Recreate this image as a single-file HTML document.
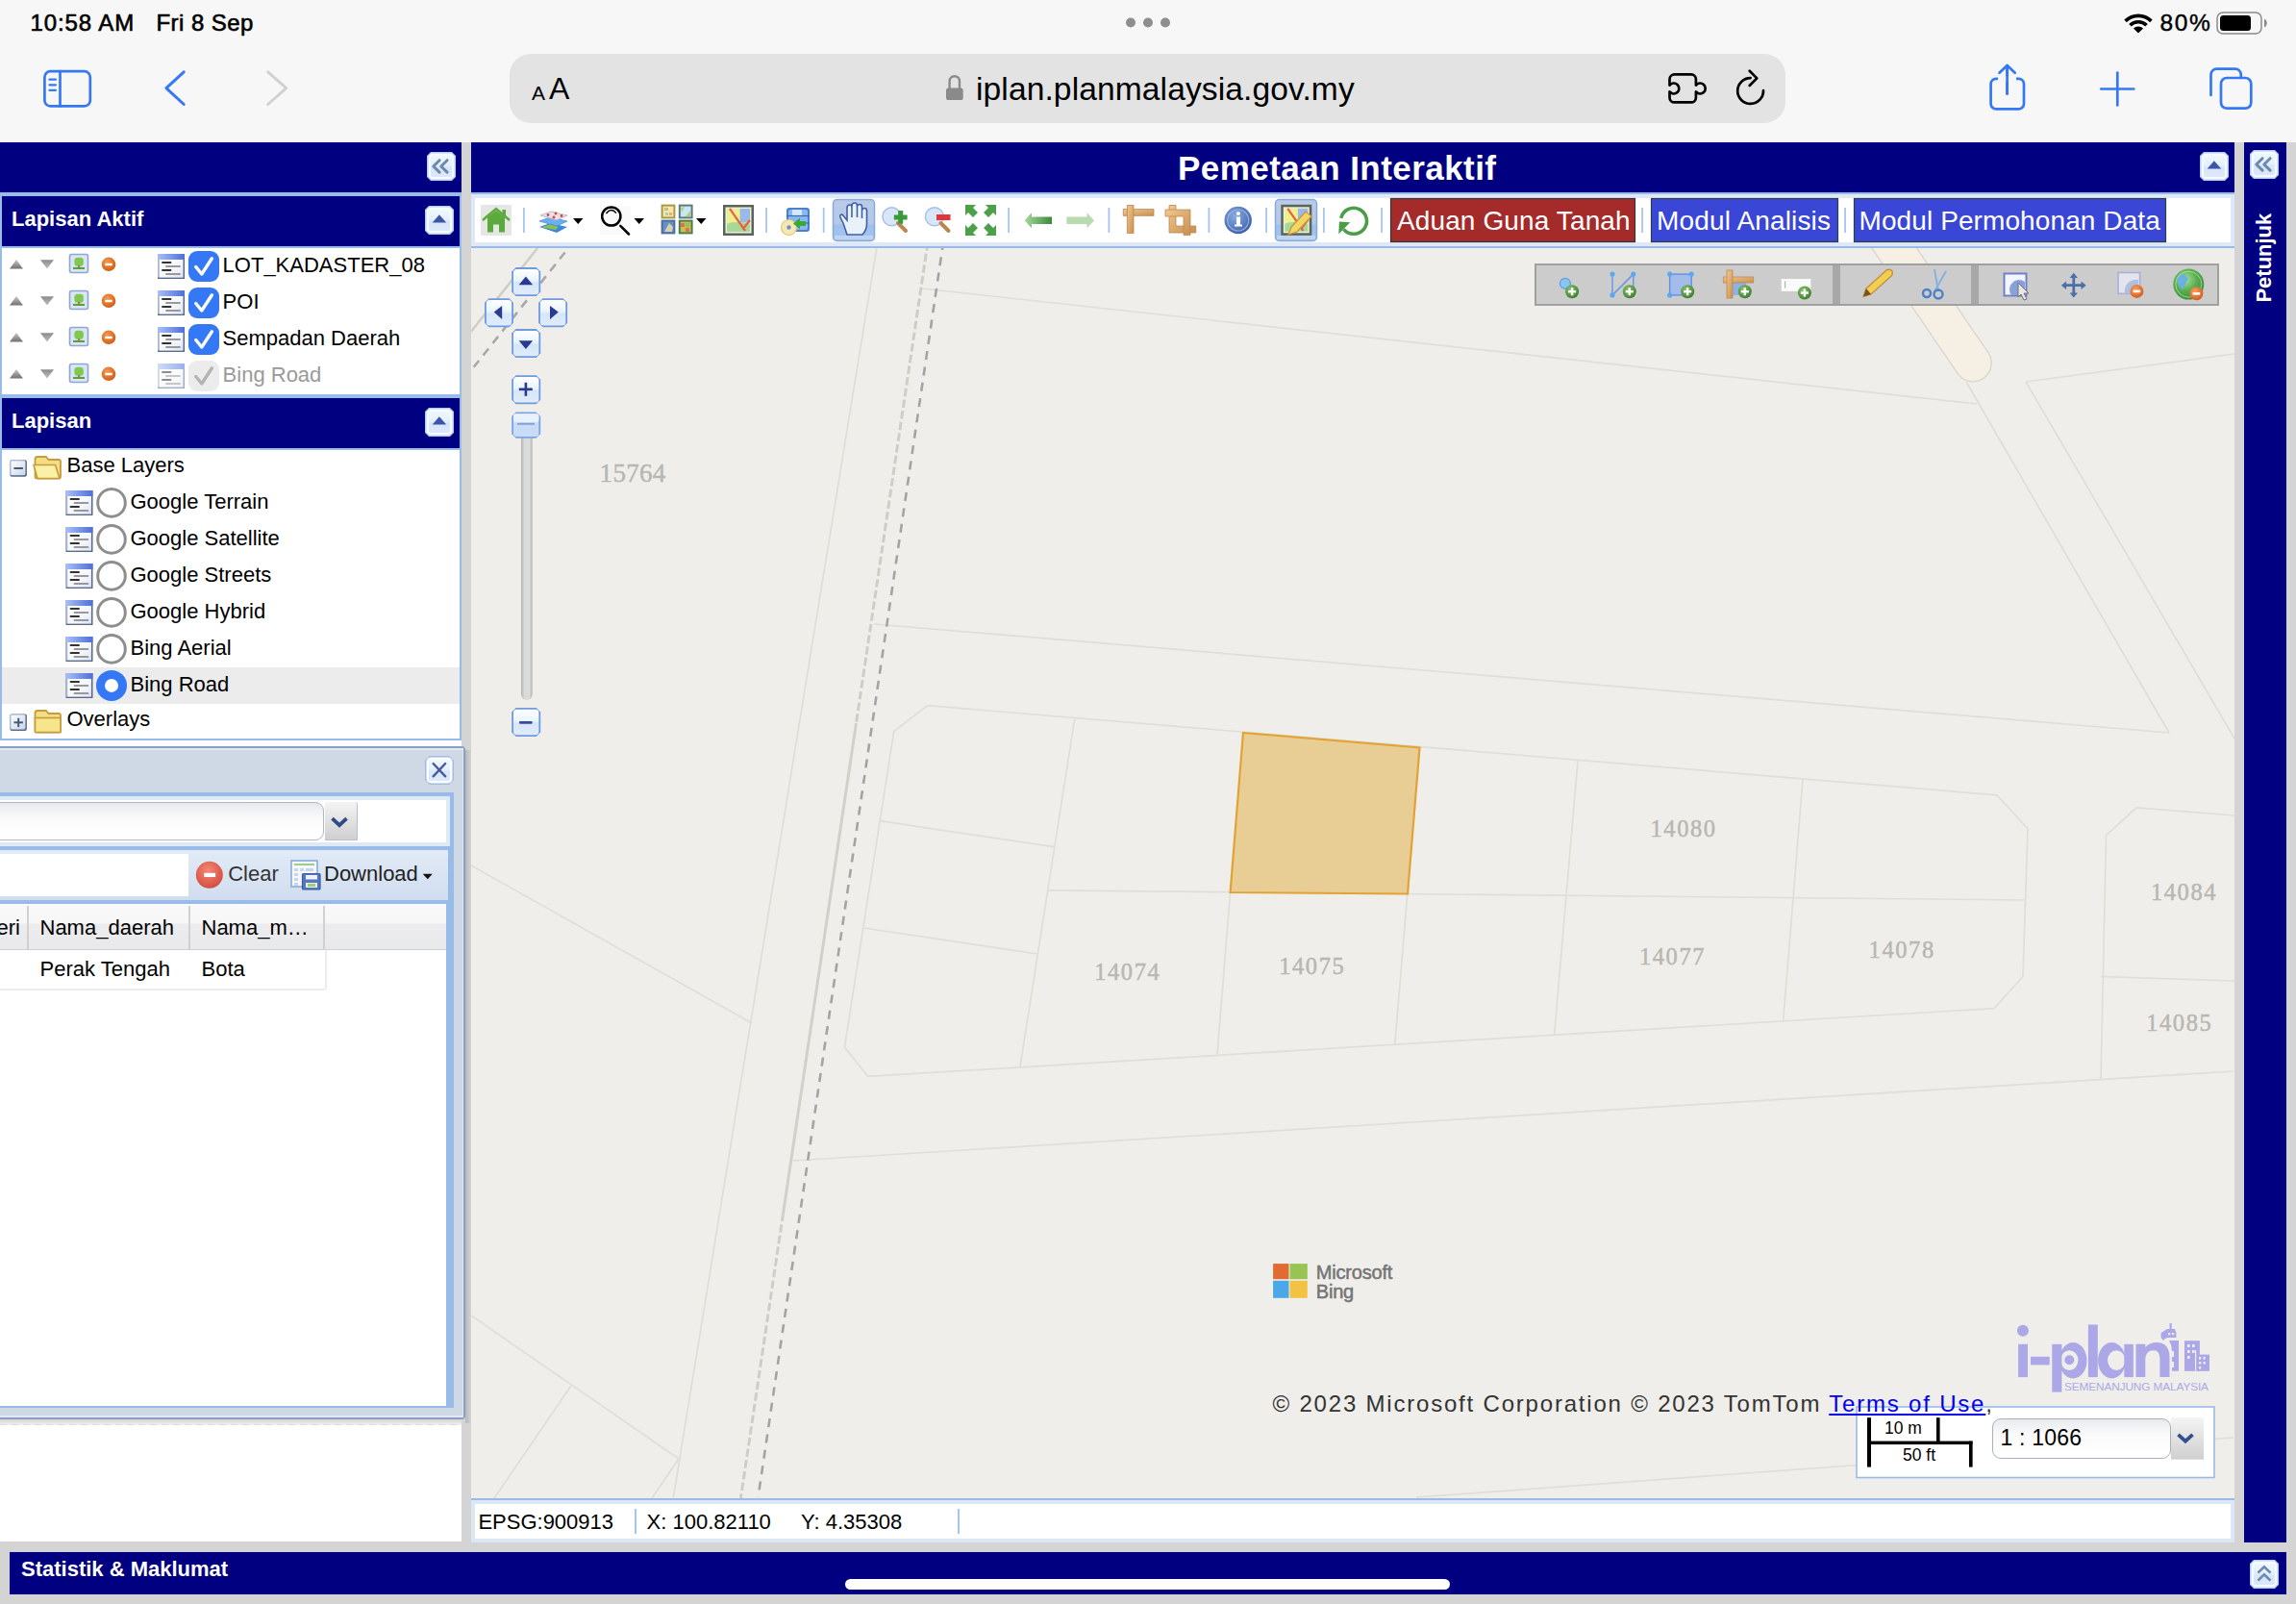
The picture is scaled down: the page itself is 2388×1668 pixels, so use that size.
<!DOCTYPE html>
<html><head><meta charset="utf-8">
<style>
*{margin:0;padding:0;box-sizing:border-box}
html,body{width:2388px;height:1668px;overflow:hidden;background:#d4d4d4;font-family:"Liberation Sans",sans-serif;position:relative}
.a{position:absolute}
.navy{background:#000080}
.t{position:absolute;white-space:nowrap;line-height:1;-webkit-font-smoothing:antialiased}
body{-webkit-font-smoothing:antialiased}
svg{position:absolute;overflow:visible}
</style></head><body>

<!-- safari chrome -->
<div class="a" style="left:0;top:0;width:2388px;height:148px;background:#f7f7f7"></div>
<div class="a" style="left:530px;top:56px;width:1327px;height:72px;border-radius:22px;background:#e3e3e3"></div>
<div class="t" style="left:31.5px;top:12px;font-size:24px;font-weight:400;color:#000;letter-spacing:0.9px;-webkit-text-stroke:0.6px #000">10:58 AM</div>
<div class="t" style="left:162.5px;top:12px;font-size:24px;font-weight:400;color:#000;letter-spacing:0.45px;-webkit-text-stroke:0.6px #000">Fri 8 Sep</div>
<svg class="a" style="left:0;top:0" width="2388" height="148">
 <g fill="#8e8e8e"><circle cx="1176" cy="23.5" r="5"/><circle cx="1194" cy="23.5" r="5"/><circle cx="1212" cy="23.5" r="5"/></g>
 <g fill="none" stroke="#3478f6" stroke-width="2.7" stroke-linecap="round" stroke-linejoin="round">
  <rect x="46.4" y="74.2" width="47.4" height="36.2" rx="6"/>
  <line x1="62.5" y1="74.2" x2="62.5" y2="110.4"/>
  <line x1="51.4" y1="82.7" x2="57.9" y2="82.7" stroke-width="2.2"/>
  <line x1="51.4" y1="88.3" x2="57.9" y2="88.3" stroke-width="2.2"/>
  <line x1="51.4" y1="93.8" x2="57.9" y2="93.8" stroke-width="2.2"/>
  <polyline points="191.2,74.8 172.9,91.6 191.2,108.5" stroke-width="3"/>
  <rect x="2070.6" y="81.8" width="34.4" height="31.6" rx="5.5" />
  <line x1="2087.6" y1="68.5" x2="2087.6" y2="97.4"/>
  <polyline points="2079.5,75.8 2087.6,68 2095.7,75.8"/>
  <line x1="2185.3" y1="92.5" x2="2219.3" y2="92.5"/>
  <line x1="2202.3" y1="75.5" x2="2202.3" y2="109.5"/>
  <path d="M2299.5 99 V77.6 a6 6 0 0 1 6 -6 H2324.8 a6 6 0 0 1 6 6 V81"/>
  <rect x="2310" y="81" width="31.3" height="31.7" rx="6"/>
 </g>
 <rect x="2078" y="79" width="19" height="6" fill="#f6f6f6"/>
 <line x1="2087.6" y1="68.5" x2="2087.6" y2="97.4" stroke="#3478f6" stroke-width="2.7" stroke-linecap="round"/>
 <polyline points="278.7,74.8 297.7,91.6 278.7,108.5" fill="none" stroke="#d1d1d1" stroke-width="3" stroke-linecap="round" stroke-linejoin="round"/>
 <!-- lock -->
 <path d="M987.6 92 v-7.6 a5.2 5.2 0 0 1 10.4 0 v7.6" fill="none" stroke="#8a8a8a" stroke-width="2.4"/>
 <rect x="984" y="91.4" width="17.7" height="12.6" rx="2.6" fill="#8a8a8a"/>
 <!-- extension -->
 <path d="M1741.5 77.4 H1758.9 a5 5 0 0 1 5 5 V88.6 A5.5 5.5 0 1 1 1763.9 95.4 V101.4 a5 5 0 0 1 -5 5 H1741.5 a5 5 0 0 1 -5 -5 V95.4 A5.5 5.5 0 1 0 1736.5 88.6 V82.4 a5 5 0 0 1 5 -5 Z" fill="none" stroke="#000" stroke-width="2.7" stroke-linejoin="round"/>
 <!-- reload -->
 <path d="M1834 94 A13.4 13.4 0 1 1 1820.6 81.1" fill="none" stroke="#000" stroke-width="2.7" stroke-linecap="round"/>
 <polyline points="1819.7,73.8 1827.3,81.4 1819.7,89" fill="none" stroke="#000" stroke-width="2.7" stroke-linecap="round" stroke-linejoin="round"/>
 <!-- wifi -->
 <g fill="none" stroke="#000" stroke-width="3.7">
  <path d="M2210.6 21.9 A19 19 0 0 1 2237.4 21.9"/>
  <path d="M2215.5 26.3 A12 12 0 0 1 2232.5 26.3"/>
 </g>
 <path d="M2224 34.6 L2218.9 29.5 A7.2 7.2 0 0 1 2229.1 29.5 Z" fill="#000"/>
 <rect x="2306" y="13" width="46" height="22" rx="6" fill="none" stroke="#8a8a8a" stroke-width="1.5"/>
 <rect x="2309" y="16" width="32" height="16" rx="3.5" fill="#000"/>
 <path d="M2355 19.5 a5 5 0 0 1 0 9 z" fill="#8a8a8a"/>
</svg>
<div class="t" style="left:2246.5px;top:11.6px;font-size:24.5px;color:#000;letter-spacing:1.6px;-webkit-text-stroke:0.4px #000">80%</div>
<div class="t" style="left:553px;top:86.2px;font-size:21px;color:#000">A</div>
<div class="t" style="left:571px;top:76px;font-size:32px;color:#000">A</div>
<div class="t" style="left:1015px;top:75.6px;font-size:33.6px;color:#000;letter-spacing:0.1px">iplan.planmalaysia.gov.my</div>


<div class="a" style="left:0px;top:148px;width:480px;height:52px;background:#000080"></div>
<div class="a" style="left:0px;top:200px;width:480px;height:4px;background:#99bbe8"></div>
<div class="a" style="left:0px;top:204px;width:480px;height:566px;background:#99bbe8"></div>
<div class="a" style="left:2px;top:204px;width:476px;height:52px;background:#000080"></div>
<div class="a" style="left:2px;top:258px;width:476px;height:152px;background:#fff"></div>
<div class="a" style="left:2px;top:414px;width:476px;height:52px;background:#000080"></div>
<div class="a" style="left:2px;top:468px;width:476px;height:300px;background:#fff"></div>
<div class="a" style="left:2px;top:694px;width:476px;height:38px;background:#ececec"></div>
<div class="a" style="left:0px;top:770px;width:480px;height:833px;background:#fff"></div>
<svg style="left:0;top:0" width="490" height="1668">
<defs>
<linearGradient id="gbtn" x1="0" y1="0" x2="0" y2="1"><stop offset="0" stop-color="#eef8fd"/><stop offset="0.45" stop-color="#e4f0fb"/><stop offset="0.55" stop-color="#d8e6f9"/><stop offset="1" stop-color="#dce8fa"/></linearGradient>
<linearGradient id="glt" x1="0" y1="0" x2="1" y2="0"><stop offset="0" stop-color="#a8c0f4"/><stop offset="1" stop-color="#4e6fd8"/></linearGradient>
<linearGradient id="glg" x1="0" y1="0" x2="1" y2="1"><stop offset="0" stop-color="#ffffff"/><stop offset="0.6" stop-color="#f4f6fc"/><stop offset="1" stop-color="#dfe4f4"/></linearGradient>
<linearGradient id="gpm" x1="0" y1="0" x2="1" y2="1"><stop offset="0" stop-color="#fdfeff"/><stop offset="1" stop-color="#c9d6ea"/></linearGradient>
<linearGradient id="gtri" x1="0" y1="0" x2="0" y2="1"><stop offset="0" stop-color="#c8c8c8"/><stop offset="1" stop-color="#707070"/></linearGradient>
<linearGradient id="gtri2" x1="0" y1="0" x2="0" y2="1"><stop offset="0" stop-color="#8a8a8a"/><stop offset="1" stop-color="#c0c0c0"/></linearGradient>
<radialGradient id="gor" cx="0.4" cy="0.35" r="0.7"><stop offset="0" stop-color="#f59a52"/><stop offset="1" stop-color="#cf5a12"/></radialGradient>
<radialGradient id="gred" cx="0.45" cy="0.35" r="0.7"><stop offset="0" stop-color="#f48878"/><stop offset="1" stop-color="#d2483a"/></radialGradient>
</defs>
<polygon points="448,158 470,158 474,162 474,184 470,188 448,188 444,184 444,162" fill="#b4cdee"/><polygon points="448.5,159.5 469.5,159.5 472.5,162.5 472.5,183.5 469.5,186.5 448.5,186.5 445.5,183.5 445.5,162.5" fill="#f6f9fd"/><rect x="448" y="162" width="22" height="22" rx="2" fill="url(#gbtn)"/><polyline points="457.1,166.7 450.8,173 457.1,179.1" fill="none" stroke="#6a8ab0" stroke-width="3" stroke-linecap="round" stroke-linejoin="round"/><polyline points="465.1,166.7 458.8,173 465.1,179.1" fill="none" stroke="#6a8ab0" stroke-width="3" stroke-linecap="round" stroke-linejoin="round"/>
<polygon points="446,214 468,214 472,218 472,240 468,244 446,244 442,240 442,218" fill="#b4cdee"/><polygon points="446.5,215.5 467.5,215.5 470.5,218.5 470.5,239.5 467.5,242.5 446.5,242.5 443.5,239.5 443.5,218.5" fill="#f6f9fd"/><rect x="446" y="218" width="22" height="22" rx="2" fill="url(#gbtn)"/><polygon points="456.9,223.3 449.7,231.5 464.2,231.5" fill="#3d55a8"/>
<polygon points="446,424 468,424 472,428 472,450 468,454 446,454 442,450 442,428" fill="#b4cdee"/><polygon points="446.5,425.5 467.5,425.5 470.5,428.5 470.5,449.5 467.5,452.5 446.5,452.5 443.5,449.5 443.5,428.5" fill="#f6f9fd"/><rect x="446" y="428" width="22" height="22" rx="2" fill="url(#gbtn)"/><polygon points="456.9,433.3 449.7,441.5 464.2,441.5" fill="#3d55a8"/>
<polygon points="17,270 10,279.5 24,279.5" fill="url(#gtri)"/>
<polygon points="42,270.2 56,270.2 49,279.5" fill="url(#gtri2)"/>
<rect x="72.5" y="264.5" width="19" height="19" rx="2" fill="#dce6f2" stroke="#8ea6d2" stroke-width="1.6"/>
<rect x="76.5" y="268" width="11" height="11" fill="#cfe0f0"/>
<rect x="77.4" y="267.8" width="9.4" height="9" rx="3.6" fill="#80c850"/>
<rect x="81" y="276" width="2.2" height="2.5" fill="#b07a40"/>
<rect x="76" y="278" width="12" height="2" fill="#5aa040"/>
<circle cx="113" cy="274.8" r="7.3" fill="url(#gor)"/>
<rect x="109.2" y="273.8" width="7.6" height="2.4" fill="#fff"/>
<g transform="translate(164,264)"><rect x="0" y="0" width="28" height="26" fill="#5a6a88"/><rect x="0" y="0" width="26.5" height="24.5" fill="#a9b8d0"/><rect x="1.8" y="6" width="24.5" height="18.5" fill="url(#glg)"/><rect x="0" y="0" width="28" height="6" fill="url(#glt)"/><g stroke-linecap="round" stroke-width="1.9"><line x1="5" y1="9" x2="13.5" y2="9" stroke="#333"/><line x1="9" y1="13" x2="23" y2="13" stroke="#999"/><line x1="5" y1="17" x2="13.5" y2="17" stroke="#333"/><line x1="9" y1="21" x2="23" y2="21" stroke="#999"/></g></g>
<rect x="196" y="261" width="32" height="32" rx="9" fill="#3478f6"/><polyline points="203.7,277.5 209.8,285 220.4,268.8" fill="none" stroke="#fff" stroke-width="3.4" stroke-linecap="round" stroke-linejoin="round"/>
<polygon points="17,308 10,317.5 24,317.5" fill="url(#gtri)"/>
<polygon points="42,308.2 56,308.2 49,317.5" fill="url(#gtri2)"/>
<rect x="72.5" y="302.5" width="19" height="19" rx="2" fill="#dce6f2" stroke="#8ea6d2" stroke-width="1.6"/>
<rect x="76.5" y="306" width="11" height="11" fill="#cfe0f0"/>
<rect x="77.4" y="305.8" width="9.4" height="9" rx="3.6" fill="#80c850"/>
<rect x="81" y="314" width="2.2" height="2.5" fill="#b07a40"/>
<rect x="76" y="316" width="12" height="2" fill="#5aa040"/>
<circle cx="113" cy="312.8" r="7.3" fill="url(#gor)"/>
<rect x="109.2" y="311.8" width="7.6" height="2.4" fill="#fff"/>
<g transform="translate(164,302)"><rect x="0" y="0" width="28" height="26" fill="#5a6a88"/><rect x="0" y="0" width="26.5" height="24.5" fill="#a9b8d0"/><rect x="1.8" y="6" width="24.5" height="18.5" fill="url(#glg)"/><rect x="0" y="0" width="28" height="6" fill="url(#glt)"/><g stroke-linecap="round" stroke-width="1.9"><line x1="5" y1="9" x2="13.5" y2="9" stroke="#333"/><line x1="9" y1="13" x2="23" y2="13" stroke="#999"/><line x1="5" y1="17" x2="13.5" y2="17" stroke="#333"/><line x1="9" y1="21" x2="23" y2="21" stroke="#999"/></g></g>
<rect x="196" y="299" width="32" height="32" rx="9" fill="#3478f6"/><polyline points="203.7,315.5 209.8,323 220.4,306.8" fill="none" stroke="#fff" stroke-width="3.4" stroke-linecap="round" stroke-linejoin="round"/>
<polygon points="17,346 10,355.5 24,355.5" fill="url(#gtri)"/>
<polygon points="42,346.2 56,346.2 49,355.5" fill="url(#gtri2)"/>
<rect x="72.5" y="340.5" width="19" height="19" rx="2" fill="#dce6f2" stroke="#8ea6d2" stroke-width="1.6"/>
<rect x="76.5" y="344" width="11" height="11" fill="#cfe0f0"/>
<rect x="77.4" y="343.8" width="9.4" height="9" rx="3.6" fill="#80c850"/>
<rect x="81" y="352" width="2.2" height="2.5" fill="#b07a40"/>
<rect x="76" y="354" width="12" height="2" fill="#5aa040"/>
<circle cx="113" cy="350.8" r="7.3" fill="url(#gor)"/>
<rect x="109.2" y="349.8" width="7.6" height="2.4" fill="#fff"/>
<g transform="translate(164,340)"><rect x="0" y="0" width="28" height="26" fill="#5a6a88"/><rect x="0" y="0" width="26.5" height="24.5" fill="#a9b8d0"/><rect x="1.8" y="6" width="24.5" height="18.5" fill="url(#glg)"/><rect x="0" y="0" width="28" height="6" fill="url(#glt)"/><g stroke-linecap="round" stroke-width="1.9"><line x1="5" y1="9" x2="13.5" y2="9" stroke="#333"/><line x1="9" y1="13" x2="23" y2="13" stroke="#999"/><line x1="5" y1="17" x2="13.5" y2="17" stroke="#333"/><line x1="9" y1="21" x2="23" y2="21" stroke="#999"/></g></g>
<rect x="196" y="337" width="32" height="32" rx="9" fill="#3478f6"/><polyline points="203.7,353.5 209.8,361 220.4,344.8" fill="none" stroke="#fff" stroke-width="3.4" stroke-linecap="round" stroke-linejoin="round"/>
<polygon points="17,384 10,393.5 24,393.5" fill="url(#gtri)"/>
<polygon points="42,384.2 56,384.2 49,393.5" fill="url(#gtri2)"/>
<rect x="72.5" y="378.5" width="19" height="19" rx="2" fill="#dce6f2" stroke="#8ea6d2" stroke-width="1.6"/>
<rect x="76.5" y="382" width="11" height="11" fill="#cfe0f0"/>
<rect x="77.4" y="381.8" width="9.4" height="9" rx="3.6" fill="#80c850"/>
<rect x="81" y="390" width="2.2" height="2.5" fill="#b07a40"/>
<rect x="76" y="392" width="12" height="2" fill="#5aa040"/>
<circle cx="113" cy="388.8" r="7.3" fill="url(#gor)"/>
<rect x="109.2" y="387.8" width="7.6" height="2.4" fill="#fff"/>
<g transform="translate(164,378)" opacity="0.55"><rect x="0" y="0" width="28" height="26" fill="#5a6a88"/><rect x="0" y="0" width="26.5" height="24.5" fill="#a9b8d0"/><rect x="1.8" y="6" width="24.5" height="18.5" fill="url(#glg)"/><rect x="0" y="0" width="28" height="6" fill="url(#glt)"/><g stroke-linecap="round" stroke-width="1.9"><line x1="5" y1="9" x2="13.5" y2="9" stroke="#333"/><line x1="9" y1="13" x2="23" y2="13" stroke="#999"/><line x1="5" y1="17" x2="13.5" y2="17" stroke="#333"/><line x1="9" y1="21" x2="23" y2="21" stroke="#999"/></g></g>
<rect x="196" y="375" width="32" height="32" rx="9" fill="#ececec"/><polyline points="203.7,391.5 209.8,399 220.4,382.8" fill="none" stroke="#b4b4b4" stroke-width="3.4" stroke-linecap="round" stroke-linejoin="round"/>
<rect x="10.4" y="478.2" width="17.5" height="17.5" rx="2" fill="#5b6b86"/><rect x="10.4" y="478.2" width="16" height="16" rx="2" fill="#b9c6da"/><rect x="11.6" y="479.4" width="14.6" height="14.6" rx="1" fill="url(#gpm)"/><line x1="14.4" y1="487.0" x2="23.9" y2="487.0" stroke="#4a5a75" stroke-width="2"/>
<g transform="translate(34,474)"><path d="M2.5 3.5 Q2.5 1 5 1 H14 L16.5 4 H27 Q29 4 29 6 V21.5 Q29 23.5 27 23.5 H4.5 Q2.5 23.5 2.5 21.5 Z" fill="#f3dd86" stroke="#c69c3c" stroke-width="1.8"/><path d="M1 9.5 H23.5 L28 23.5 H5 Z" fill="#fbf1a6" stroke="#c69c3c" stroke-width="1.6" stroke-linejoin="round"/></g>
<g transform="translate(68.5,510)"><rect x="0" y="0" width="28" height="26" fill="#5a6a88"/><rect x="0" y="0" width="26.5" height="24.5" fill="#a9b8d0"/><rect x="1.8" y="6" width="24.5" height="18.5" fill="url(#glg)"/><rect x="0" y="0" width="28" height="6" fill="url(#glt)"/><g stroke-linecap="round" stroke-width="1.9"><line x1="5" y1="9" x2="13.5" y2="9" stroke="#333"/><line x1="9" y1="13" x2="23" y2="13" stroke="#999"/><line x1="5" y1="17" x2="13.5" y2="17" stroke="#333"/><line x1="9" y1="21" x2="23" y2="21" stroke="#999"/></g></g>
<circle cx="116" cy="522.9" r="14.3" fill="#fff" stroke="#8e8e8e" stroke-width="3"/>
<g transform="translate(68.5,548)"><rect x="0" y="0" width="28" height="26" fill="#5a6a88"/><rect x="0" y="0" width="26.5" height="24.5" fill="#a9b8d0"/><rect x="1.8" y="6" width="24.5" height="18.5" fill="url(#glg)"/><rect x="0" y="0" width="28" height="6" fill="url(#glt)"/><g stroke-linecap="round" stroke-width="1.9"><line x1="5" y1="9" x2="13.5" y2="9" stroke="#333"/><line x1="9" y1="13" x2="23" y2="13" stroke="#999"/><line x1="5" y1="17" x2="13.5" y2="17" stroke="#333"/><line x1="9" y1="21" x2="23" y2="21" stroke="#999"/></g></g>
<circle cx="116" cy="560.9" r="14.3" fill="#fff" stroke="#8e8e8e" stroke-width="3"/>
<g transform="translate(68.5,586)"><rect x="0" y="0" width="28" height="26" fill="#5a6a88"/><rect x="0" y="0" width="26.5" height="24.5" fill="#a9b8d0"/><rect x="1.8" y="6" width="24.5" height="18.5" fill="url(#glg)"/><rect x="0" y="0" width="28" height="6" fill="url(#glt)"/><g stroke-linecap="round" stroke-width="1.9"><line x1="5" y1="9" x2="13.5" y2="9" stroke="#333"/><line x1="9" y1="13" x2="23" y2="13" stroke="#999"/><line x1="5" y1="17" x2="13.5" y2="17" stroke="#333"/><line x1="9" y1="21" x2="23" y2="21" stroke="#999"/></g></g>
<circle cx="116" cy="598.9" r="14.3" fill="#fff" stroke="#8e8e8e" stroke-width="3"/>
<g transform="translate(68.5,624)"><rect x="0" y="0" width="28" height="26" fill="#5a6a88"/><rect x="0" y="0" width="26.5" height="24.5" fill="#a9b8d0"/><rect x="1.8" y="6" width="24.5" height="18.5" fill="url(#glg)"/><rect x="0" y="0" width="28" height="6" fill="url(#glt)"/><g stroke-linecap="round" stroke-width="1.9"><line x1="5" y1="9" x2="13.5" y2="9" stroke="#333"/><line x1="9" y1="13" x2="23" y2="13" stroke="#999"/><line x1="5" y1="17" x2="13.5" y2="17" stroke="#333"/><line x1="9" y1="21" x2="23" y2="21" stroke="#999"/></g></g>
<circle cx="116" cy="636.9" r="14.3" fill="#fff" stroke="#8e8e8e" stroke-width="3"/>
<g transform="translate(68.5,662)"><rect x="0" y="0" width="28" height="26" fill="#5a6a88"/><rect x="0" y="0" width="26.5" height="24.5" fill="#a9b8d0"/><rect x="1.8" y="6" width="24.5" height="18.5" fill="url(#glg)"/><rect x="0" y="0" width="28" height="6" fill="url(#glt)"/><g stroke-linecap="round" stroke-width="1.9"><line x1="5" y1="9" x2="13.5" y2="9" stroke="#333"/><line x1="9" y1="13" x2="23" y2="13" stroke="#999"/><line x1="5" y1="17" x2="13.5" y2="17" stroke="#333"/><line x1="9" y1="21" x2="23" y2="21" stroke="#999"/></g></g>
<circle cx="116" cy="674.9" r="14.3" fill="#fff" stroke="#8e8e8e" stroke-width="3"/>
<g transform="translate(68.5,700)"><rect x="0" y="0" width="28" height="26" fill="#5a6a88"/><rect x="0" y="0" width="26.5" height="24.5" fill="#a9b8d0"/><rect x="1.8" y="6" width="24.5" height="18.5" fill="url(#glg)"/><rect x="0" y="0" width="28" height="6" fill="url(#glt)"/><g stroke-linecap="round" stroke-width="1.9"><line x1="5" y1="9" x2="13.5" y2="9" stroke="#333"/><line x1="9" y1="13" x2="23" y2="13" stroke="#999"/><line x1="5" y1="17" x2="13.5" y2="17" stroke="#333"/><line x1="9" y1="21" x2="23" y2="21" stroke="#999"/></g></g>
<circle cx="116" cy="712.9" r="16" fill="#3478f6"/><circle cx="116" cy="712.9" r="7" fill="#fff"/>
<rect x="10.4" y="742.5" width="17.5" height="17.5" rx="2" fill="#5b6b86"/><rect x="10.4" y="742.5" width="16" height="16" rx="2" fill="#b9c6da"/><rect x="11.6" y="743.7" width="14.6" height="14.6" rx="1" fill="url(#gpm)"/><line x1="14.4" y1="751.3" x2="23.9" y2="751.3" stroke="#4a5a75" stroke-width="2"/><line x1="19.200000000000003" y1="746.7" x2="19.200000000000003" y2="756.0" stroke="#4a5a75" stroke-width="2"/>
<g transform="translate(34,738)"><path d="M2.5 3.5 Q2.5 1 5 1 H14 L16.5 4 H27 Q29 4 29 6 V21.5 Q29 23.5 27 23.5 H4.5 Q2.5 23.5 2.5 21.5 Z" fill="#f3dd86" stroke="#c69c3c" stroke-width="1.8"/><rect x="2.5" y="8.5" width="26.5" height="15" fill="#f6e58c" stroke="#c69c3c" stroke-width="1.6"/></g>
</svg>
<div class="t" style="left:12.0px;top:217.2px;font-size:22px;font-weight:700;color:#fff;">Lapisan Aktif</div>
<div class="t" style="left:12.0px;top:427.2px;font-size:22px;font-weight:700;color:#fff;">Lapisan</div>
<div class="t" style="left:231.6px;top:265.4px;font-size:22px;font-weight:400;color:#000;">LOT_KADASTER_08</div>
<div class="t" style="left:231.6px;top:303.4px;font-size:22px;font-weight:400;color:#000;">POI</div>
<div class="t" style="left:231.6px;top:341.4px;font-size:22px;font-weight:400;color:#000;">Sempadan Daerah</div>
<div class="t" style="left:231.6px;top:379.4px;font-size:22px;font-weight:400;color:#9a9a9a;">Bing Road</div>
<div class="t" style="left:69.5px;top:473.2px;font-size:22px;font-weight:400;color:#000;">Base Layers</div>
<div class="t" style="left:135.5px;top:511.4px;font-size:22px;font-weight:400;color:#000;">Google Terrain</div>
<div class="t" style="left:135.5px;top:549.4px;font-size:22px;font-weight:400;color:#000;">Google Satellite</div>
<div class="t" style="left:135.5px;top:587.4px;font-size:22px;font-weight:400;color:#000;">Google Streets</div>
<div class="t" style="left:135.5px;top:625.4px;font-size:22px;font-weight:400;color:#000;">Google Hybrid</div>
<div class="t" style="left:135.5px;top:663.4px;font-size:22px;font-weight:400;color:#000;">Bing Aerial</div>
<div class="t" style="left:135.5px;top:701.4px;font-size:22px;font-weight:400;color:#000;">Bing Road</div>
<div class="t" style="left:69.5px;top:736.9px;font-size:22px;font-weight:400;color:#000;">Overlays</div>
<div class="a" style="left:0px;top:776px;width:484px;height:700px;background:#8aa0c0;border-top-right-radius:4px;border-bottom-right-radius:4px"></div>
<div class="a" style="left:0px;top:778px;width:482px;height:696px;background:#e2e8f0"></div>
<div class="a" style="left:0px;top:780px;width:481px;height:692px;background:#cfd9e6"></div>
<div class="a" style="left:484px;top:780px;width:6px;height:700px;background:linear-gradient(90deg,#b8b8b8,#d4d4d4)"></div>
<div class="a" style="left:0px;top:1476px;width:480px;height:5.5px;background:linear-gradient(180deg,#d4d4d4,#f2f2f2)"></div>
<div class="a" style="left:0px;top:1481px;width:480px;height:1px;background:repeating-linear-gradient(90deg,#dcdcdc 0 7px,transparent 7px 12px)"></div>
<div class="a" style="left:0px;top:824px;width:472px;height:640px;background:#99bbe8"></div>
<div class="a" style="left:0px;top:828px;width:468px;height:52px;background:#dfe8f5"></div>
<div class="a" style="left:0px;top:832px;width:464px;height:44px;background:#fff"></div>
<div class="a" style="left:0px;top:884px;width:466px;height:52px;background:linear-gradient(180deg,#e2ebf7,#d0ddef)"></div>
<div class="a" style="left:0px;top:888px;width:196px;height:44px;background:#fff"></div>
<div class="a" style="left:0px;top:940px;width:464px;height:48px;background:linear-gradient(180deg,#f9f9f9 0%,#f7f7f7 40%,#ececee 45%,#e8e9eb 100%)"></div>
<div class="a" style="left:0px;top:987px;width:464px;height:1.5px;background:#d0d0d0"></div>
<div class="a" style="left:0px;top:988px;width:464px;height:474px;background:#fff"></div>
<div class="a" style="left:464px;top:988px;width:8px;height:474px;background:#99bbe8"></div>
<div class="a" style="left:28px;top:942px;width:2px;height:45px;background:#d0d0d0"></div>
<div class="a" style="left:196px;top:942px;width:2px;height:45px;background:#d0d0d0"></div>
<div class="a" style="left:336px;top:942px;width:2px;height:45px;background:#d0d0d0"></div>
<div class="a" style="left:0px;top:1028px;width:338px;height:1.5px;background:#ececec"></div>
<div class="a" style="left:338px;top:988px;width:1.5px;height:41px;background:#ececec"></div>
<div class="a" style="left:-20px;top:834px;width:357px;height:40px;border:1.5px solid #b0b6c8;border-radius:0 9px 9px 0;background:linear-gradient(180deg,#e6e9ec 0%,#fbfbfb 45%,#fff 100%)"></div>
<div class="a" style="left:338px;top:834px;width:34px;height:40px;border-right:1.5px solid #b8bfd0;border-bottom:1.5px solid #b8bfd0;border-top-right-radius:3px;background:linear-gradient(180deg,#f4f4f4,#cfcfcf)"></div>
<svg style="left:0;top:0" width="490" height="1100">
<polyline points="345.5,851.2 353,858.2 360.5,851.2" fill="none" stroke="#2d4a8a" stroke-width="3.8" stroke-linejoin="miter"/>
<polygon points="447,786 467,786 472,791 472,811 467,816 447,816 442,811 442,791" fill="#a0bce6"/>
<rect x="443.5" y="787.5" width="27" height="27" rx="5" fill="#fbfdff"/>
<rect x="446" y="790" width="22" height="22" rx="2" fill="url(#gbtn)"/>
<g stroke="#4a5aa0" stroke-width="2.4" stroke-linecap="round"><line x1="450.6" y1="794" x2="463.2" y2="807.3"/><line x1="463.2" y1="794" x2="450.6" y2="807.3"/></g>
<circle cx="217.8" cy="909.8" r="14" fill="url(#gred)"/>
<rect x="212.3" y="907.8" width="11.8" height="4.2" fill="#fff"/>
<rect x="303" y="895" width="27" height="27" fill="#f4f7fc" stroke="#8aaad8" stroke-width="1.6"/>
<line x1="306" y1="899" x2="327" y2="899" stroke="#88c070" stroke-width="1.6"/>
<g fill="#c8d6ea"><rect x="306" y="903" width="4" height="3"/><rect x="312" y="903" width="4" height="3"/><rect x="318" y="903" width="8" height="3"/><rect x="306" y="908" width="4" height="3"/><rect x="306" y="913" width="4" height="3"/><rect x="306" y="918" width="4" height="3"/></g>
<rect x="314.5" y="908.5" width="18.5" height="16.5" rx="1" fill="#5578c0" stroke="#3a5aa8" stroke-width="1.2"/>
<rect x="318" y="910" width="12" height="4.5" fill="#f0f4fa"/>
<rect x="318" y="918" width="12" height="5" fill="#e8f0e0"/><rect x="320" y="919" width="8" height="3" fill="#9cd070"/>
<polygon points="439.7,908.7 449.8,908.7 444.75,914.3" fill="#111"/>
</svg>
<div class="t" style="left:237.2px;top:897.9px;font-size:22px;font-weight:400;color:#333;">Clear</div>
<div class="t" style="left:337.0px;top:898.4px;font-size:22px;font-weight:400;color:#222;">Download</div>
<div class="t" style="left:-3.5px;top:953.5px;font-size:22px;font-weight:400;color:#000;">eri</div>
<div class="t" style="left:41.5px;top:953.5px;font-size:22px;font-weight:400;color:#000;">Nama_daerah</div>
<div class="t" style="left:209.5px;top:953.5px;font-size:22px;font-weight:400;color:#000;">Nama_m…</div>
<div class="t" style="left:41.5px;top:997.3px;font-size:22px;font-weight:400;color:#000;">Perak Tengah</div>
<div class="t" style="left:209.5px;top:997.3px;font-size:22px;font-weight:400;color:#000;">Bota</div>
<div class="a" style="left:490px;top:148px;width:1834px;height:52px;background:#000080"></div>
<div class="a" style="left:490px;top:200px;width:1834px;height:58px;background:#99bbe8"></div>
<div class="a" style="left:490px;top:202px;width:1834px;height:54px;background:#dfe8f6"></div>
<div class="a" style="left:494px;top:206px;width:1826px;height:46px;background:#fff"></div>
<div class="a" style="left:490px;top:258px;width:1834px;height:1300px;background:#efeeea"></div>
<div class="a" style="left:490px;top:1558px;width:1834px;height:46px;background:#99bbe8"></div>
<div class="a" style="left:490px;top:1560px;width:1834px;height:44px;background:#dce6f4"></div>
<div class="a" style="left:494px;top:1564px;width:1826px;height:36px;background:#fff"></div>
<div class="a" style="left:2334px;top:148px;width:44px;height:1456px;background:#000080"></div>
<div class="a" style="left:10px;top:1614px;width:2368px;height:44px;background:#000080"></div>
<svg style="left:490px;top:258px;overflow:hidden" width="1834" height="1300" viewBox="490 258 1834 1300">
<path d="M1962 246 L2052 377.5" stroke="#dcd8cc" stroke-width="40" stroke-linecap="round" fill="none"/>
<path d="M1962 246 L2052 377.5" stroke="#f6f0e4" stroke-width="37" stroke-linecap="round" fill="none"/>
<g fill="none" stroke="#dfded7" stroke-width="1.7">
<polyline points="959,300 2056,420"/>
<polyline points="2045,397 2256,762"/>
<polyline points="909,649 2256,762"/>
<polyline points="2107,397 2324,368"/>
<polyline points="2107,397 2324,768"/>
<polyline points="825,1207 2323,1114"/>
<polyline points="490,900 782,1064"/>
<polyline points="490,1368 706,1517"/>
<polyline points="706,1517 678,1558"/>
<polyline points="594,1441 514,1558"/>
<polyline points="1473,1557 2323,1495"/>
<polyline points="964.7,733.7 2077,826.8 2109,861.8 2104,1015.5 2074,1048.6 902.7,1119.4 878.4,1089 929.7,760.7 964.7,733.7"/>
<polyline points="1089.5,925.9 2107.5,936"/>
<polyline points="1117.8,747 1061,1109"/>
<polyline points="1293,762 1266,1096.4"/>
<polyline points="1476.5,777.5 1450.8,1085.6"/>
<polyline points="1641,791 1616.7,1075.5"/>
<polyline points="1875,811 1854.7,1060.7"/>
<polyline points="915.5,853.7 1096,880.7"/>
<polyline points="899,965 1079,992"/>
<polyline points="2324,848 2222,840 2190.5,868.6 2185,1123.4"/>
<polyline points="2185,1015.5 2324,1020"/>
</g>
<line x1="911.8" y1="258" x2="700.4" y2="1557" stroke="#e0dfd7" stroke-width="1.8"/>
<line x1="964.1" y1="258" x2="890.5" y2="752" stroke="#cfcec6" stroke-width="3" stroke-dasharray="8.5 3.3" stroke-dashoffset="6"/>
<line x1="890.5" y1="752" x2="814.1" y2="1265" stroke="#d2d1c8" stroke-width="3"/>
<line x1="814.1" y1="1265" x2="770.4" y2="1558" stroke="#cfcec6" stroke-width="3" stroke-dasharray="8.5 3.3" stroke-dashoffset="3.5"/>
<line x1="980.2" y1="258" x2="788.5" y2="1557" stroke="#a4a4a4" stroke-width="2.6" stroke-dasharray="9.1 7.4" stroke-dashoffset="7.2"/>
<line x1="559.1" y1="258" x2="490" y2="344.8" stroke="#d0cfc6" stroke-width="2.6"/>
<line x1="587.6" y1="262.5" x2="492.7" y2="381.8" stroke="#a8a8a8" stroke-width="2.6" stroke-dasharray="9 7" stroke-dashoffset="0.3"/>
<polygon points="1293,762 1476.5,777.5 1464,929.5 1279.6,928" fill="#e8ce95" stroke="#e3a334" stroke-width="2.2"/>
</svg>
<div class="t" style="left:608.1px;top:478.6px;width:100px;text-align:center;font-family:'Liberation Serif',serif;font-size:27px;letter-spacing:0.3px;color:#b8b7b2;-webkit-text-stroke:0.5px #b8b7b2;text-shadow:0 0 2px #f4f4f0">15764</div>
<div class="t" style="left:1701.1px;top:849.6px;width:100px;text-align:center;font-family:'Liberation Serif',serif;font-size:24.5px;letter-spacing:1.6px;color:#b8b7b2;-webkit-text-stroke:0.5px #b8b7b2;text-shadow:0 0 2px #f4f4f0">14080</div>
<div class="t" style="left:1122.8px;top:999.1px;width:100px;text-align:center;font-family:'Liberation Serif',serif;font-size:24.5px;letter-spacing:1.6px;color:#b8b7b2;-webkit-text-stroke:0.5px #b8b7b2;text-shadow:0 0 2px #f4f4f0">14074</div>
<div class="t" style="left:1314.8px;top:993.0px;width:100px;text-align:center;font-family:'Liberation Serif',serif;font-size:24.5px;letter-spacing:1.6px;color:#b8b7b2;-webkit-text-stroke:0.5px #b8b7b2;text-shadow:0 0 2px #f4f4f0">14075</div>
<div class="t" style="left:1689.5px;top:982.9px;width:100px;text-align:center;font-family:'Liberation Serif',serif;font-size:24.5px;letter-spacing:1.6px;color:#b8b7b2;-webkit-text-stroke:0.5px #b8b7b2;text-shadow:0 0 2px #f4f4f0">14077</div>
<div class="t" style="left:1928.2px;top:976.2px;width:100px;text-align:center;font-family:'Liberation Serif',serif;font-size:24.5px;letter-spacing:1.6px;color:#b8b7b2;-webkit-text-stroke:0.5px #b8b7b2;text-shadow:0 0 2px #f4f4f0">14078</div>
<div class="t" style="left:2221.5px;top:915.5px;width:100px;text-align:center;font-family:'Liberation Serif',serif;font-size:24.5px;letter-spacing:1.6px;color:#b8b7b2;-webkit-text-stroke:0.5px #b8b7b2;text-shadow:0 0 2px #f4f4f0">14084</div>
<div class="t" style="left:2216.8px;top:1051.6px;width:100px;text-align:center;font-family:'Liberation Serif',serif;font-size:24.5px;letter-spacing:1.6px;color:#b8b7b2;-webkit-text-stroke:0.5px #b8b7b2;text-shadow:0 0 2px #f4f4f0">14085</div>
<svg style="left:0;top:0" width="2388" height="1668">
<defs><linearGradient id="gtrig" x1="0" y1="0" x2="0" y2="1"><stop offset="0" stop-color="#f4f4f4"/><stop offset="1" stop-color="#cfcfcf"/></linearGradient></defs>
<defs>
<linearGradient id="gctl" x1="0" y1="0" x2="0" y2="1"><stop offset="0" stop-color="#ffffff"/><stop offset="0.45" stop-color="#e8f4fd"/><stop offset="0.55" stop-color="#d6e6f9"/><stop offset="1" stop-color="#e0ecfb"/></linearGradient>
<linearGradient id="ghand" x1="0" y1="0" x2="0" y2="1"><stop offset="0" stop-color="#b9cbe8"/><stop offset="0.6" stop-color="#b4c8e8"/><stop offset="0.61" stop-color="#9ec0ee"/><stop offset="1" stop-color="#a6c4ee"/></linearGradient>
<radialGradient id="ggrn" cx="0.4" cy="0.35" r="0.7"><stop offset="0" stop-color="#8cc870"/><stop offset="1" stop-color="#3a7a2a"/></radialGradient>
<radialGradient id="gor2" cx="0.4" cy="0.35" r="0.7"><stop offset="0" stop-color="#f8a060"/><stop offset="1" stop-color="#d25a18"/></radialGradient>
<radialGradient id="ginfo" cx="0.4" cy="0.35" r="0.7"><stop offset="0" stop-color="#8aaee0"/><stop offset="1" stop-color="#3a5ca8"/></radialGradient>
<radialGradient id="gglobe" cx="0.4" cy="0.35" r="0.7"><stop offset="0" stop-color="#a8e0a0"/><stop offset="0.5" stop-color="#5ab050"/><stop offset="1" stop-color="#3a8a3a"/></radialGradient>
<linearGradient id="gwood" x1="0" y1="0" x2="1" y2="1"><stop offset="0" stop-color="#f0c890"/><stop offset="1" stop-color="#c89050"/></linearGradient>
<linearGradient id="garr" x1="0" y1="0" x2="1" y2="0"><stop offset="0" stop-color="#a8d8a0"/><stop offset="1" stop-color="#3a8a3a"/></linearGradient>
<linearGradient id="gtrk" x1="0" y1="0" x2="1" y2="0"><stop offset="0" stop-color="#b4b4b4"/><stop offset="0.3" stop-color="#d8dadc"/><stop offset="0.7" stop-color="#dcdcdc"/><stop offset="1" stop-color="#b8b8b8"/></linearGradient>
</defs>
<polygon points="2292,158 2314,158 2318,162 2318,184 2314,188 2292,188 2288,184 2288,162" fill="#b4cdee"/><polygon points="2292.5,159.5 2313.5,159.5 2316.5,162.5 2316.5,183.5 2313.5,186.5 2292.5,186.5 2289.5,183.5 2289.5,162.5" fill="#f6f9fd"/><rect x="2292" y="162" width="22" height="22" rx="2" fill="url(#gbtn)"/><polygon points="2302.9,167.3 2295.7,175.5 2310.2,175.5" fill="#3d55a8"/>
<polygon points="2344,156 2366,156 2370,160 2370,182 2366,186 2344,186 2340,182 2340,160" fill="#b4cdee"/><polygon points="2344.5,157.5 2365.5,157.5 2368.5,160.5 2368.5,181.5 2365.5,184.5 2344.5,184.5 2341.5,181.5 2341.5,160.5" fill="#f6f9fd"/><rect x="2344" y="160" width="22" height="22" rx="2" fill="url(#gbtn)"/><polyline points="2353.1,164.7 2346.8,171 2353.1,177.1" fill="none" stroke="#6a8ab0" stroke-width="3" stroke-linecap="round" stroke-linejoin="round"/><polyline points="2361.1,164.7 2354.8,171 2361.1,177.1" fill="none" stroke="#6a8ab0" stroke-width="3" stroke-linecap="round" stroke-linejoin="round"/>
<polygon points="2344,1622 2366,1622 2370,1626 2370,1648 2366,1652 2344,1652 2340,1648 2340,1626" fill="#b4cdee"/><polygon points="2344.5,1623.5 2365.5,1623.5 2368.5,1626.5 2368.5,1647.5 2365.5,1650.5 2344.5,1650.5 2341.5,1647.5 2341.5,1626.5" fill="#f6f9fd"/><rect x="2344" y="1626" width="22" height="22" rx="2" fill="url(#gbtn)"/><polyline points="2348.4,1635.6 2354.9,1629.2 2361.5,1635.6" fill="none" stroke="#6a8ab0" stroke-width="2.6"/><polyline points="2348.4,1643.6 2354.9,1637.2 2361.5,1643.6" fill="none" stroke="#6a8ab0" stroke-width="2.6"/>
<rect x="500" y="213" width="32" height="32" fill="#e6e6e6"/>
<polyline points="502,229 516,217 530,229" fill="none" stroke="#5aaa3c" stroke-width="2.4"/>
<rect x="522.5" y="218" width="3.5" height="6" fill="#5aaa3c"/>
<path d="M507 226 L516 219 L525 226 V241.5 H519 V233.5 H513 V241.5 H507 Z" fill="#5aaa3c"/>
<rect x="544.0" y="216" width="1.8" height="26" fill="#a8c4f0"/>
<rect x="796.2" y="216" width="1.8" height="26" fill="#a8c4f0"/>
<rect x="855.8000000000001" y="216" width="1.8" height="26" fill="#a8c4f0"/>
<rect x="1048.2" y="216" width="1.8" height="26" fill="#a8c4f0"/>
<rect x="1152.5" y="216" width="1.8" height="26" fill="#a8c4f0"/>
<rect x="1256.5" y="216" width="1.8" height="26" fill="#a8c4f0"/>
<rect x="1316.2" y="216" width="1.8" height="26" fill="#a8c4f0"/>
<rect x="1376.0" y="216" width="1.8" height="26" fill="#a8c4f0"/>
<rect x="1436.2" y="216" width="1.8" height="26" fill="#a8c4f0"/>
<rect x="1707.2" y="216" width="1.8" height="26" fill="#a8c4f0"/>
<rect x="1918.2" y="216" width="1.8" height="26" fill="#a8c4f0"/>
<path d="M561 236 L572 232 L590 236 L579 242 Z" fill="#3a88d8"/>
<path d="M563 236.5 L572 233 L581 236 L578 239 Z" fill="#8ac050"/>
<path d="M561 230 L572 226 L590 230 L579 235 Z" fill="#6ab0f0" stroke="#4a90d0" stroke-width="0.8"/>
<path d="M562 224 L573 220 L590 224 L579 229 Z" fill="#e4e4e8" stroke="#b0b0b8" stroke-width="0.8"/>
<g fill="#e04040"><circle cx="570" cy="223.5" r="1.4"/><circle cx="578" cy="222" r="1.4"/><circle cx="576" cy="226" r="1.4"/><circle cx="584" cy="224.5" r="1.4"/></g>
<polygon points="596,227 606.5,227 601.25,233" fill="#000"/>
<polygon points="659.5,227 670.0,227 664.75,233" fill="#000"/>
<polygon points="724,227 734.5,227 729.25,233" fill="#000"/>
<rect x="624" y="214" width="32" height="30" fill="#fafafa"/>
<circle cx="635.8" cy="225" r="9.6" fill="none" stroke="#000" stroke-width="2.5"/>
<path d="M630.4 222 Q635.7 215 640.9 221.6" fill="none" stroke="#000" stroke-width="1.5"/>
<line x1="645.3" y1="234.8" x2="654" y2="243.5" stroke="#000" stroke-width="2.5" stroke-linecap="round"/>
<rect x="688.6" y="213.6" width="12.8" height="12.8" fill="#f0e8b0" stroke="#a89a40" stroke-width="2"/>
<path d="M691 216 h4 v3 h-4z M696 221 h3 v3 h-3z" fill="#e0b080"/><path d="M692 221 h3 v3 h-3z" fill="#a8d8a0"/>
<rect x="706.8" y="213.6" width="12.8" height="12.8" fill="#c8e8f8" stroke="#607880" stroke-width="2"/>
<path d="M708 216 L712 215 L709 221 Z M713 225 L718 219 L718 225 Z" fill="#b8d070"/>
<rect x="688.6" y="229.6" width="12.8" height="12.8" fill="#6890c0" stroke="#4a70a8" stroke-width="2"/>
<path d="M691 241 L696 232 L700 236 L699 241 Z" fill="#d8d0b0"/>
<rect x="706.8" y="229.6" width="12.8" height="12.8" fill="#c8c050" stroke="#4a8048" stroke-width="2"/>
<path d="M708 232 h4 v4 h-4z M713 237 h4 v4 h-4z" fill="#e07050"/><path d="M713 232 h4 v4 h-4z" fill="#90c060"/>
<rect x="752" y="213" width="32" height="32" fill="#5a6458"/><rect x="754.5" y="215.5" width="27" height="27" fill="#e8f0e0"/><rect x="756" y="217" width="24" height="24" fill="#eef090"/><rect x="769.6" y="217" width="10.4" height="14.4" fill="#9ab8e8"/><path d="M756 232.84 Q764.8 229.0 780 232.84 V241 H756 Z" fill="#a8d898"/><path d="M759 217 L775.04 240 M772.8 237.96 L780 229.0" stroke="#e86040" stroke-width="2.2" fill="none"/>
<rect x="818" y="216" width="24" height="25" rx="3" fill="#4a80d0"/>
<rect x="820" y="218" width="20" height="21" rx="2" fill="#8ab8f0"/>
<rect x="824" y="218" width="10" height="6" fill="#e8f4ff" opacity="0.8"/>
<line x1="818" y1="224.5" x2="842" y2="224.5" stroke="#3a6ab8" stroke-width="1.2"/><line x1="818" y1="232" x2="842" y2="232" stroke="#3a6ab8" stroke-width="1.2"/>
<circle cx="820.5" cy="236.5" r="8" fill="#f4e8b8" stroke="#e0c870" stroke-width="1.2"/><circle cx="820.5" cy="236.5" r="2.2" fill="#6a90c8"/>
<path d="M825 232.5 L832 226.5 V230 H838 V235 H832 V238.5 Z" fill="#3aa83a"/>
<rect x="866.5" y="207.5" width="43" height="43" rx="4" fill="url(#ghand)" stroke="#8aaad8" stroke-width="1.5"/>
<rect x="868" y="245" width="40" height="4" fill="#c0d4f2"/>
<path d="M877 232 L874 226 Q873 223 876 223 L881 229 V216 Q881 213 884 213 Q886 213 886 216 V226 V214 Q886 211 889 211 Q891.5 211 891.5 214 V226 V215 Q891.5 212.5 894 212.5 Q896.5 212.5 896.5 215 V227 V219 Q896.5 216.5 899 216.5 Q901.5 216.5 901.5 219 V233 Q901.5 239 897 244 H881 Z" fill="#e8f2f8" stroke="#4060a8" stroke-width="1.6"/>
<circle cx="927.4" cy="225.2" r="9.5" fill="#d8e6f8" stroke="#a8c0e8" stroke-width="1.5"/>
<line x1="934" y1="232" x2="942" y2="240" stroke="#b88850" stroke-width="4" stroke-linecap="round"/>
<path d="M934.2 219 H939.2 V223.4 H943.6 V228.4 H939.2 V232.8 H934.2 V228.4 H929.8 V223.4 H934.2 Z" fill="#3a9a3a"/>
<circle cx="971.9" cy="225.2" r="9.5" fill="#d8e6f8" stroke="#a8c0e8" stroke-width="1.5"/>
<line x1="978.5" y1="232" x2="986.5" y2="240" stroke="#b88850" stroke-width="4" stroke-linecap="round"/>
<rect x="974" y="223" width="14.5" height="6" fill="#e03838"/>
<path d="M1004 213 H1015 L1012 216 L1017 221 L1012 226 L1007 221 L1004 224 Z" fill="#4ca048"/>
<path d="M1036 213 H1025 L1028 216 L1023 221 L1028 226 L1033 221 L1036 224 Z" fill="#4ca048"/>
<path d="M1004 245 H1015 L1012 242 L1017 237 L1012 232 L1007 237 L1004 234 Z" fill="#4ca048"/>
<path d="M1036 245 H1025 L1028 242 L1023 237 L1028 232 L1033 237 L1036 234 Z" fill="#4ca048"/>
<path d="M1065.5 229.2 L1073 221.3 V225.5 H1094 V233 H1073 V237.2 Z" fill="url(#garr)"/>
<path d="M1138 229.2 L1130.5 221.3 V225.5 H1109.4 V233 H1130.5 V237.2 Z" fill="#b8dcb0"/>
<rect x="1168.2" y="217.6" width="31.8" height="6.7" fill="url(#gwood)" stroke="#c08850" stroke-width="0.8"/>
<rect x="1172.3" y="213.5" width="6.7" height="29" fill="url(#gwood)" stroke="#c08850" stroke-width="0.8"/>
<path d="M1216 213.5 H1223 V235 H1243.8 V242 H1216 Z" fill="url(#gwood)" stroke="#c08850" stroke-width="0.8"/>
<path d="M1212 218 H1238 V244.6 H1231 V225 H1212 Z" fill="url(#gwood)" stroke="#c08850" stroke-width="0.8"/>
<circle cx="1287.7" cy="229" r="14.2" fill="url(#ginfo)"/>
<circle cx="1287.7" cy="229" r="11" fill="none" stroke="#a8c0e8" stroke-width="1.2" opacity="0.7"/>
<circle cx="1287.9" cy="222" r="2" fill="#fff"/><rect x="1286" y="225.5" width="4" height="9" fill="#fff"/><rect x="1284" y="233.5" width="8" height="2" fill="#fff"/>
<rect x="1326.5" y="207.5" width="43" height="43" rx="4" fill="url(#ghand)" stroke="#8aaad8" stroke-width="1.5"/>
<rect x="1328" y="245" width="40" height="4" fill="#c0d4f2"/>
<rect x="1332.3" y="212.8" width="32" height="32" fill="#5a6458"/><rect x="1334.8" y="215.3" width="27" height="27" fill="#e8f0e0"/><rect x="1336.3" y="216.8" width="24" height="24" fill="#eef090"/><rect x="1349.8999999999999" y="216.8" width="10.4" height="14.4" fill="#9ab8e8"/><path d="M1336.3 232.64000000000001 Q1345.1 228.8 1360.3 232.64000000000001 V240.8 H1336.3 Z" fill="#a8d898"/><path d="M1339.3 216.8 L1355.34 239.8 M1353.1 237.76000000000002 L1360.3 228.8" stroke="#e86040" stroke-width="2.2" fill="none"/>
<path d="M1340 244 L1343 236 L1358 220 L1364 225 L1349 241 Z" fill="#f0d860" stroke="#c89040" stroke-width="1.2"/>
<path d="M1397.5 238.3 A13.5 13.5 0 1 0 1394.8 226.9" fill="none" stroke="#4a9e48" stroke-width="3.6"/>
<polygon points="1392.3,243.4 1392.9,230.4 1404.2,231.2" fill="#4a9e48"/>
<rect x="1446.5" y="206.5" width="254" height="45" fill="#a52a2a" stroke="#2a3a3a" stroke-width="1.2"/>
<rect x="1717.5" y="206.5" width="194" height="45" fill="#3a46d6" stroke="#2a4040" stroke-width="1.2"/>
<rect x="1928.5" y="206.5" width="324" height="45" fill="#3a46d6" stroke="#2a4040" stroke-width="1.2"/>
<polygon points="536.7,278.1 557.7,278.1 562.2,282.6 562.2,303.6 557.7,308.1 536.7,308.1 532.2,303.6 532.2,282.6" fill="#6e9ade"/><rect x="534.0" y="279.90000000000003" width="26.4" height="26.4" rx="3.5" fill="url(#gctl)"/><polygon points="546.9,287.5 539.6,296.2 554.2,296.2" fill="#2a3a90"/>
<polygon points="508.5,310.2 529.5,310.2 534,314.7 534,335.7 529.5,340.2 508.5,340.2 504,335.7 504,314.7" fill="#6e9ade"/><rect x="505.8" y="312.0" width="26.4" height="26.4" rx="3.5" fill="url(#gctl)"/><polygon points="513.7,324.6 522.2,318 522.2,332.1" fill="#2a3a90"/>
<polygon points="564.6,310.2 585.6,310.2 590.1,314.7 590.1,335.7 585.6,340.2 564.6,340.2 560.1,335.7 560.1,314.7" fill="#6e9ade"/><rect x="561.9" y="312.0" width="26.4" height="26.4" rx="3.5" fill="url(#gctl)"/><polygon points="580.8,324.6 572,318 572,332.1" fill="#2a3a90"/>
<polygon points="536.7,342.1 557.7,342.1 562.2,346.6 562.2,367.6 557.7,372.1 536.7,372.1 532.2,367.6 532.2,346.6" fill="#6e9ade"/><rect x="534.0" y="343.90000000000003" width="26.4" height="26.4" rx="3.5" fill="url(#gctl)"/><polygon points="546.9,362.9 539.6,354.2 554.2,354.2" fill="#2a3a90"/>
<polygon points="536.7,390.3 557.7,390.3 562.2,394.8 562.2,415.8 557.7,420.3 536.7,420.3 532.2,415.8 532.2,394.8" fill="#6e9ade"/><rect x="534.0" y="392.1" width="26.4" height="26.4" rx="3.5" fill="url(#gctl)"/><rect x="539.8" y="403.5" width="14" height="2.6" fill="#2a3a90"/><rect x="545.6" y="397.8" width="2.6" height="14" fill="#2a3a90"/>
<rect x="542" y="440" width="11.8" height="288" rx="5.9" fill="url(#gtrk)"/>
<polygon points="536.7,428.4 557.5,428.4 562.2,433 562.2,451.2 557.5,455.8 536.7,455.8 532.2,451.2 532.2,433" fill="#7aa4e4"/>
<rect x="534" y="430.2" width="26.4" height="23.8" rx="3" fill="#c8dcf8"/>
<rect x="534" y="430.2" width="26.4" height="9" rx="3" fill="#e8f2fe"/>
<rect x="538" y="439.8" width="18" height="2" fill="#8aa0d8"/>
<polygon points="536.7,736 557.7,736 562.2,740.5 562.2,761.5 557.7,766 536.7,766 532.2,761.5 532.2,740.5" fill="#6e9ade"/><rect x="534.0" y="737.8" width="26.4" height="26.4" rx="3.5" fill="url(#gctl)"/><rect x="540" y="750" width="13.7" height="2.8" rx="1" fill="#3a4a98"/>
<rect x="1597" y="275" width="710" height="42" fill="#cccccc" stroke="#a0a0a0" stroke-width="2"/>
<rect x="1906" y="276" width="8" height="40" fill="#a8a8a8"/>
<rect x="2050" y="276" width="8" height="40" fill="#a8a8a8"/>
<circle cx="1627.9" cy="294.8" r="5.5" fill="#8ac4f0" stroke="#5aa0e0" stroke-width="1.2"/>
<circle cx="1635.1" cy="303.2" r="7" fill="url(#ggrn)"/><rect x="1631.1" y="302.0" width="8" height="2.4" fill="#fff"/><rect x="1633.8999999999999" y="299.2" width="2.4" height="8" fill="#fff"/>
<polyline points="1677,285.1 1677,306.9 1698.8,285.1 1698.8,306.9" fill="none" stroke="#6a98e0" stroke-width="1.5"/>
<g fill="#5aa8f0"><circle cx="1677" cy="285.1" r="2.6"/><circle cx="1677" cy="306.9" r="2.6"/><circle cx="1698.8" cy="285.1" r="2.6"/></g>
<circle cx="1694.8" cy="303.2" r="7" fill="url(#ggrn)"/><rect x="1690.8" y="302.0" width="8" height="2.4" fill="#fff"/><rect x="1693.6" y="299.2" width="2.4" height="8" fill="#fff"/>
<rect x="1736.7" y="285.1" width="22.5" height="21.8" fill="#a4bcec" stroke="#6a90e0" stroke-width="1.5"/>
<g fill="#5aa8f0"><circle cx="1736.7" cy="285.1" r="2.6"/><circle cx="1759.2" cy="285.1" r="2.6"/><circle cx="1736.7" cy="306.9" r="2.6"/></g>
<circle cx="1755.2" cy="303.2" r="7" fill="url(#ggrn)"/><rect x="1751.2" y="302.0" width="8" height="2.4" fill="#fff"/><rect x="1754.0" y="299.2" width="2.4" height="8" fill="#fff"/>
<rect x="1800" y="291" width="16" height="16" fill="#90b0e8"/>
<rect x="1792.3" y="288" width="31.4" height="6" fill="url(#gwood)" stroke="#c08850" stroke-width="0.8"/>
<rect x="1796" y="281" width="6" height="29" fill="url(#gwood)" stroke="#c08850" stroke-width="0.8"/>
<circle cx="1814.8" cy="303.2" r="7" fill="url(#ggrn)"/><rect x="1810.8" y="302.0" width="8" height="2.4" fill="#fff"/><rect x="1813.6" y="299.2" width="2.4" height="8" fill="#fff"/>
<rect x="1852.7" y="290" width="30.6" height="12.9" fill="#fafafa"/>
<rect x="1856" y="292.5" width="1.2" height="7" fill="#b0b0b0"/>
<circle cx="1876.9" cy="304.5" r="7" fill="url(#ggrn)"/><rect x="1872.9" y="303.3" width="8" height="2.4" fill="#fff"/><rect x="1875.7" y="300.5" width="2.4" height="8" fill="#fff"/>
<path d="M1938 308.5 L1941 300 L1962 281 Q1966 279 1968 282 Q1969 285 1967 287 L1946 306 Z" fill="#f0d050" stroke="#c89040" stroke-width="1.4"/>
<path d="M1938 308.5 L1941 300 L1946 306 Z" fill="#7a5020"/>
<line x1="2012" y1="280" x2="2016" y2="303" stroke="#8ab0e0" stroke-width="2"/>
<line x1="2024" y1="282" x2="2012" y2="303" stroke="#8ab0e0" stroke-width="2"/>
<circle cx="2004" cy="305" r="4" fill="none" stroke="#4a80c8" stroke-width="2.4"/>
<circle cx="2016" cy="306" r="4.5" fill="none" stroke="#4a80c8" stroke-width="2.4"/>
<rect x="2084.5" y="284.5" width="23" height="23" fill="#f4f6ff" stroke="#7080c8" stroke-width="2"/>
<path d="M2092 307 A10 10 0 0 1 2106 293 V307 Z" fill="#8aa0d8"/>
<path d="M2099 294 L2110 305 L2105 305 L2108 311 L2105 312 L2102 306 L2099 309 Z" fill="#e8e8e8" stroke="#707070" stroke-width="1"/>
<path d="M2156.8 283.8 L2161 289 H2158.2 V295.3 H2164.5 V292.5 L2169.7 296.7 L2164.5 300.9 V298.1 H2158.2 V304.4 H2161 L2156.8 309.6 L2152.6 304.4 H2155.4 V298.1 H2149.1 V300.9 L2143.9 296.7 L2149.1 292.5 V295.3 H2155.4 V289 H2152.6 Z" fill="#4a70a8"/>
<rect x="2203" y="283.5" width="22.6" height="21.8" fill="#e4e4ec" stroke="#a8b0d8" stroke-width="1.6"/>
<path d="M2210 305 A12 12 0 0 1 2224 291 V305 Z" fill="#b0c0e0"/>
<circle cx="2222.4" cy="302.9" r="7" fill="url(#gor2)"/><rect x="2218.6" y="301.59999999999997" width="7.6" height="2.6" fill="#fff"/>
<circle cx="2276.3" cy="295.6" r="16" fill="url(#gglobe)"/>
<path d="M2266 286 Q2272 283 2276 290 Q2272 296 2270 302 Q2266 298 2264 292 Z" fill="#6ab0e0"/>
<circle cx="2276.3" cy="295.6" r="13.5" fill="none" stroke="#d0f0c0" stroke-width="1" opacity="0.6"/>
<circle cx="2284.4" cy="305.3" r="7" fill="url(#gor2)"/><rect x="2280.6" y="304.0" width="7.6" height="2.6" fill="#fff"/>
<rect x="1931" y="1463" width="372" height="73.5" fill="#fff" stroke="#99bbe8" stroke-width="1.6"/>
<g fill="#000"><rect x="1942" y="1474.2" width="4" height="51.4"/><rect x="2014" y="1474.2" width="3.6" height="25"/><rect x="1942" y="1498.6" width="109.5" height="3.5"/><rect x="2048" y="1498.6" width="3.6" height="27"/></g>
<rect x="2258" y="1474.2" width="34" height="43.5" fill="url(#gtrig)"/>
<polyline points="2265.5,1491.8 2273,1498.6 2280.5,1491.8" fill="none" stroke="#34508e" stroke-width="3.8"/>
<rect x="1324.1" y="1314.1" width="16.4" height="16.1" fill="#e06c34"/>
<rect x="1341.5" y="1314.1" width="18.3" height="16.1" fill="#98c454"/>
<rect x="1324.1" y="1331.8" width="16.4" height="18" fill="#4aa8e8"/>
<rect x="1341.5" y="1331.8" width="18.3" height="18" fill="#f4c242"/>
<g fill="#aca8e8">
<circle cx="2103.9" cy="1383.7" r="6"/>
<rect x="2099.1" y="1397.8" width="9.9" height="34.3"/>
<rect x="2112" y="1410.8" width="19.7" height="8.6"/>
<rect x="2134.3" y="1397.8" width="10.1" height="49.8"/>
<path fill-rule="evenodd" d="M2156.1 1396.1 a14.4 18.7 0 1 1 0 37.4 a14.4 18.7 0 1 1 0 -37.4 Z M2152.3 1404.3 a9.1 10.3 0 1 0 0 20.6 a9.1 10.3 0 1 0 0 -20.6 Z"/>
<circle cx="2152.3" cy="1414.3" r="5"/>
<rect x="2171.9" y="1377.5" width="9.9" height="54.6"/>
<path fill-rule="evenodd" d="M2196.4 1396.1 a14.4 18.7 0 1 1 0 37.4 a14.4 18.7 0 1 1 0 -37.4 Z M2201.2 1404.3 a9.1 10.3 0 1 0 0 20.6 a9.1 10.3 0 1 0 0 -20.6 Z"/>
<rect x="2209.3" y="1397.8" width="9.6" height="34.3"/>
<path d="M2221.5 1397.8 H2231.3 V1401 Q2236 1396.1 2243 1396.1 Q2256.5 1396.1 2256.5 1412 V1432.1 H2246.4 V1413 Q2246.4 1404.3 2240 1404.3 Q2231.3 1404.3 2231.3 1414 V1432.1 H2221.5 Z"/>
<path d="M2254 1382 H2262 L2263.4 1386 V1391 H2256 Q2252 1391 2250 1394 L2247.6 1391 V1386 Z"/><rect x="2256.5" y="1376" width="2.2" height="7"/>
<path d="M2256 1394 H2266 V1425.8 H2259 V1422 H2261 V1416 H2259 V1411 H2261 V1405 H2259 Q2259 1399 2256 1394 Z"/>
<rect x="2272" y="1394.2" width="15.9" height="31.6"/>
<rect x="2284" y="1408.6" width="14" height="17.2"/>
</g>
<g fill="#efeeea"><rect x="2275" y="1398" width="2.6" height="3"/><rect x="2280" y="1398" width="2.6" height="3"/><rect x="2275" y="1404" width="2.6" height="3"/><rect x="2280" y="1404" width="2.6" height="3"/><rect x="2275" y="1410" width="2.6" height="3"/><rect x="2287" y="1411" width="2.2" height="2.6"/><rect x="2291.5" y="1411" width="2.2" height="2.6"/><rect x="2287" y="1416" width="2.2" height="2.6"/><rect x="2291.5" y="1416" width="2.2" height="2.6"/><rect x="2287" y="1421" width="2.2" height="2.6"/><rect x="2255" y="1386" width="2.2" height="2.2"/><rect x="2259" y="1386" width="2.2" height="2.2"/><rect x="2283" y="1404" width="1.2" height="21.8"/></g>
</svg>
<div class="t" style="left:1225.0px;top:156.9px;font-size:35px;font-weight:700;color:#fff;letter-spacing:0.45px">Pemetaan Interaktif</div>
<div class="t" style="left:1453.0px;top:215.6px;font-size:28px;font-weight:400;color:#fff;letter-spacing:0.12px">Aduan Guna Tanah</div>
<div class="t" style="left:1723.0px;top:215.6px;font-size:28px;font-weight:400;color:#fff;letter-spacing:0.15px">Modul Analisis</div>
<div class="t" style="left:1933.5px;top:215.6px;font-size:28px;font-weight:400;color:#fff;letter-spacing:0.1px">Modul Permohonan Data</div>
<div class="t" style="left:2362.3px;top:312.9px;font-size:22px;font-weight:700;color:#fff;transform-origin:0 0;transform:rotate(-90deg) translate(-1.6px,-17.9px)">Petunjuk</div>
<div class="t" style="left:22.0px;top:1621.4px;font-size:22px;font-weight:700;color:#fff;">Statistik &amp; Maklumat</div>
<div class="a" style="left:879px;top:1642px;width:629px;height:10.5px;background:#fff;border-radius:6px"></div>
<div class="t" style="left:497.4px;top:1571.5px;font-size:22px;font-weight:400;color:#000;">EPSG:900913</div>
<div class="t" style="left:672.6px;top:1571.5px;font-size:22px;font-weight:400;color:#000;">X: 100.82110</div>
<div class="t" style="left:833.0px;top:1571.5px;font-size:22px;font-weight:400;color:#000;">Y: 4.35308</div>
<div class="a" style="left:660.4px;top:1569px;width:1.8px;height:26px;background:#a8c4f0"></div>
<div class="a" style="left:996.3px;top:1569px;width:1.8px;height:26px;background:#a8c4f0"></div>
<div class="t" style="left:1368.8px;top:1312.6px;font-size:20px;font-weight:400;color:#747474;letter-spacing:-0.2px;-webkit-text-stroke:0.5px #747474">Microsoft</div>
<div class="t" style="left:1368.8px;top:1332.5px;font-size:20px;font-weight:400;color:#747474;letter-spacing:-0.2px;-webkit-text-stroke:0.5px #747474">Bing</div>
<div class="t" style="left:1323.5px;top:1447.6px;font-size:24px;font-weight:400;color:#333;letter-spacing:1.8px">© 2023 Microsoft Corporation © 2023 TomTom <span style="color:#0000ee;text-decoration:underline">Terms of Use</span>,</div>
<div class="t" style="left:1960.0px;top:1477.1px;font-size:17.5px;font-weight:400;color:#000;">10 m</div>
<div class="t" style="left:1979.0px;top:1505.0px;font-size:17.5px;font-weight:400;color:#000;">50 ft</div>
<div class="a" style="left:2072.4px;top:1474.5px;width:186px;height:42.5px;border:1.6px solid #a8b0c4;border-radius:9px;background:linear-gradient(180deg,#e8ebee 0%,#fafafa 40%,#fff 100%)"></div>
<div class="t" style="left:2080.5px;top:1483.5px;font-size:23px;font-weight:400;color:#000;letter-spacing:0.2px">1 : 1066</div>
<div class="t" style="left:2147.0px;top:1436.9px;font-size:11.8px;font-weight:400;color:#aca8e8;letter-spacing:-0.1px">SEMENANJUNG MALAYSIA</div>
</body></html>
